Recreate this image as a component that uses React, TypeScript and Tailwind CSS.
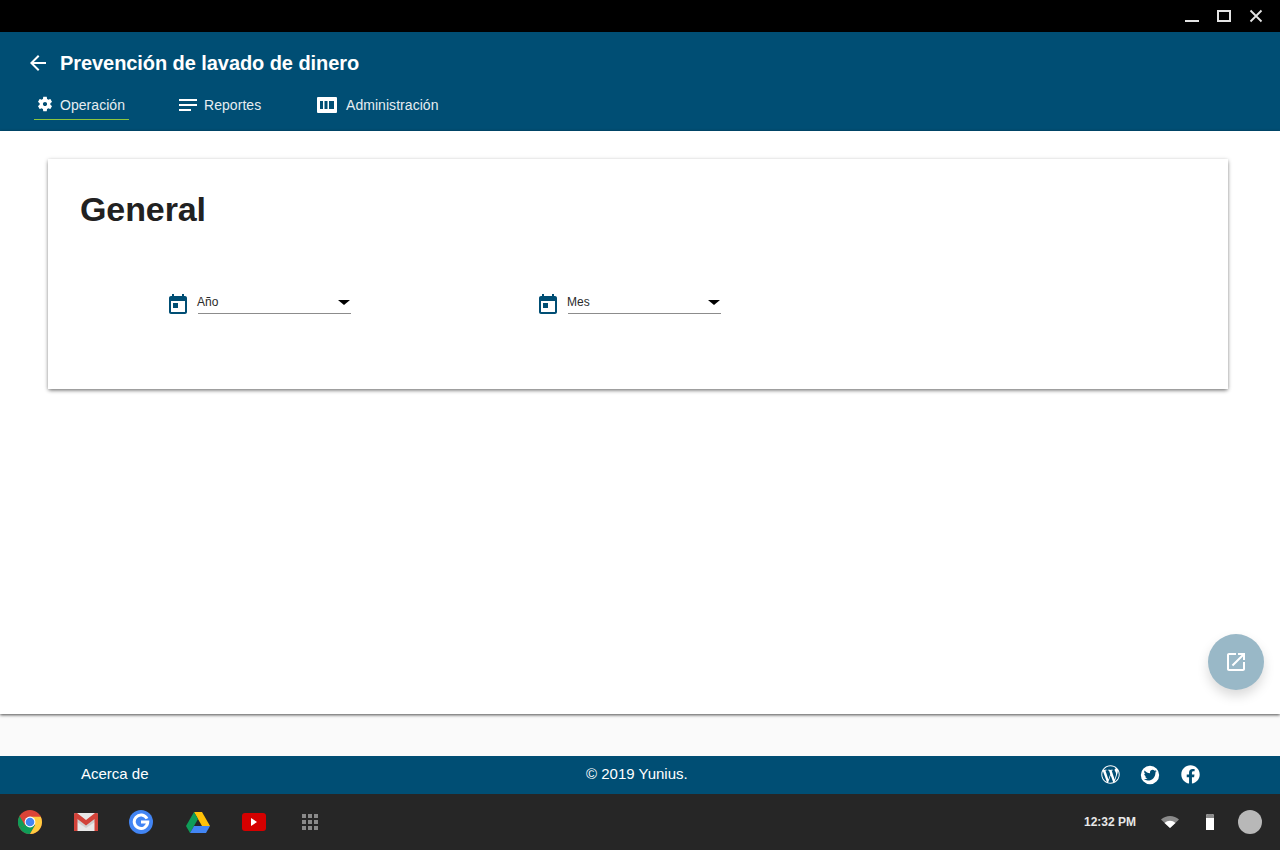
import React from "react";
import { FaWordpressSimple, FaFacebook } from "react-icons/fa";

const Ico = ({ d, className }: { d: string; className?: string }) => (
  <svg viewBox="0 0 24 24" fill="currentColor" className={className}><path d={d} /></svg>
);

const gear = "M19.14 12.94c.04-.3.06-.61.06-.94 0-.32-.02-.64-.07-.94l2.03-1.58c.18-.14.23-.41.12-.61l-1.92-3.32c-.12-.22-.37-.29-.59-.22l-2.39.96c-.5-.38-1.03-.7-1.62-.94l-.36-2.54c-.04-.24-.24-.41-.48-.41h-3.84c-.24 0-.43.17-.47.41l-.36 2.54c-.59.24-1.13.57-1.62.94l-2.39-.96c-.22-.08-.47 0-.59.22L2.74 8.87c-.12.21-.08.47.12.61l2.03 1.58c-.05.3-.09.63-.09.94s.02.64.07.94l-2.03 1.58c-.18.14-.23.41-.12.61l1.92 3.32c.12.22.37.29.59.22l2.39-.96c.5.38 1.03.7 1.62.94l.36 2.54c.05.24.24.41.48.41h3.84c.24 0 .44-.17.47-.41l.36-2.54c.59-.24 1.13-.56 1.62-.94l2.39.96c.22.08.47 0 .59-.22l1.92-3.32c.12-.22.07-.47-.12-.61l-2.01-1.58zM12 14.800c-1.540 0-2.800-1.260-2.800-2.800s1.260-2.800 2.800-2.800 2.800 1.260 2.800 2.800-1.260 2.800-2.800 2.800z";
const today = "M19 3h-1V1h-2v2H8V1H6v2H5c-1.11 0-1.99.9-1.99 2L3 19c0 1.1.89 2 2 2h14c1.1 0 2-.9 2-2V5c0-1.1-.9-2-2-2zm0 16H5V8h14v11zM7 10h5v5H7z";
const openNew = "M19 19H5V5h7V3H5c-1.11 0-2 .9-2 2v14c0 1.1.89 2 2 2h14c1.1 0 2-.9 2-2v-7h-2v7zM14 3v2h3.59l-9.83 9.83 1.41 1.41L19 6.41V10h2V3h-7z";
const twitter = "M12 2a10 10 0 1 0 0 20 10 10 0 0 0 0-20zm5.9 7.3v.4c0 3.9-3 8.3-8.3 8.3-1.7 0-3.2-.5-4.5-1.3h.7c1.4 0 2.6-.5 3.6-1.2-1.3 0-2.4-.9-2.7-2h.5c.3 0 .5 0 .8-.1-1.3-.3-2.3-1.4-2.3-2.9.4.2.8.3 1.3.4-.8-.5-1.3-1.4-1.3-2.4 0-.5.1-1 .4-1.5 1.4 1.8 3.6 2.9 6 3-.1-.2-.1-.4-.1-.7 0-1.6 1.3-2.9 2.9-2.9.8 0 1.6.4 2.1.9.7-.1 1.3-.4 1.9-.7-.2.7-.7 1.2-1.3 1.6.6-.1 1.2-.2 1.7-.5-.4.6-.9 1.2-1.4 1.6z";

function Select({ label }: { label: string }) {
  return (
    <div className="flex items-start w-[184px]">
      <Ico d={today} className="w-6 h-6 text-[#004e74] -ml-[3px] mt-[1px] shrink-0" />
      <div className="ml-[8px] w-[153px] h-[22px] border-b border-[#8c8c8c] flex items-start justify-between pt-[3px]">
        <span className="text-[12px] leading-[15px] text-[#2a2a2a] -ml-px">{label}</span>
        <span className="w-0 h-0 border-x-[6px] border-x-transparent border-t-[5px] border-t-black mt-[5px] mr-[1px]" />
      </div>
    </div>
  );
}

function Tab({ children, label, active, className }: { children: React.ReactNode; label: string; active?: boolean; className: string }) {
  return (
    <div className={`flex items-center h-[30px] ${active ? "border-b border-[#8cc63f]" : "pb-px"} ${className}`}>
      {children}
      <span className="text-[14px] leading-[18px] text-[#e6edf1] tracking-[0.05px]">{label}</span>
    </div>
  );
}

export default function App() {
  return (
    <div className="w-[1280px] h-[850px] flex flex-col overflow-hidden bg-white font-['Liberation_Sans',sans-serif]">
      <div className="h-8 bg-black flex items-center justify-end shrink-0">
        <div className="w-[14px] h-[2px] bg-[#e4e4e4] mt-[10px] mr-[18px]" />
        <div className="w-[14px] h-[12px] border-2 border-[#e4e4e4] mr-[18px]" />
        <svg viewBox="0 0 14 14" className="w-[14px] h-[14px] text-[#e4e4e4] mr-[17px]" stroke="currentColor" strokeWidth="1.8"><path d="M1.5 1.5l11 11M12.500 1.500l-11 11" /></svg>
      </div>

      <header className="h-[99px] bg-[#004e74] shrink-0 flex flex-col text-white">
        <div className="flex items-center h-[62px] pl-[26px]">
          <svg viewBox="0 0 24 24" fill="currentColor" className="w-6 h-6 mr-[10px]"><path d="M20 11H7.830l5.590-5.590L12 4l-8 8 8 8 1.410-1.410L7.830 13H20v-2z" /></svg>
          <span className="text-[20px] leading-6 font-bold tracking-[-0.07px]">Prevención de lavado de dinero</span>
        </div>
        <div className="flex pl-[34px] -mt-[4px]">
          <Tab label="Operación" active className="w-[95px] pl-[2px]">
            <Ico d={gear} className="w-[18px] h-[18px] text-white mr-[6px] -mt-[1px]" />
          </Tab>
          <Tab label="Reportes" className="ml-[50px] w-[138px]">
            <svg viewBox="0 0 18 12" fill="white" className="w-[18px] h-[12px] mr-[7px]"><path d="M0 0h18v2H0zM0 5h18v2H0zM0 10h12v2H0z" /></svg>
          </Tab>
          <Tab label="Administración" className="">
            <svg viewBox="0 0 20 16" className="w-[20px] h-[16px] mr-[9px]"><path fill="white" fillRule="evenodd" d="M1 0h18a1 1 0 0 1 1 1v14a1 1 0 0 1-1 1H1a1 1 0 0 1-1-1V1a1 1 0 0 1 1-1zM3 4v8h3V4zM7.500 4v8h3V4zM12 4v8h5V4z" /></svg>
          </Tab>
        </div>
      </header>

      <main className="relative h-[583px] shrink-0 bg-white shadow-[0_1px_3px_rgba(0,0,0,0.7)] z-10 pt-[28px] pl-[48px] pr-[52px]">
        <section className="h-[230px] bg-white shadow-[0_2px_4px_-1px_rgba(0,0,0,0.45),0_1px_4px_rgba(0,0,0,0.25)] pl-[32px] pt-[30px]">
          <h1 className="text-[34px] leading-[40px] font-bold text-[#212121] tracking-[-0.1px]">General</h1>
          <div className="flex gap-[186px] mt-[63px] ml-[89px]">
            <Select label="Año" />
            <Select label="Mes" />
          </div>
        </section>
        <button className="absolute right-[16px] top-[503px] w-14 h-14 rounded-full bg-[#99b8c7] flex items-center justify-center shadow-[0_6px_12px_rgba(0,0,0,0.15)]">
          <Ico d={openNew} className="w-6 h-6 text-white" />
        </button>
      </main>

      <div className="h-[42px] bg-[#fafafa] shrink-0" />

      <footer className="relative h-[38px] bg-[#004e74] shrink-0 flex items-center text-white text-[15px]">
        <span className="ml-[81px] -mt-[2px]">Acerca de</span>
        <span className="absolute left-[586px] -mt-[2px]">© 2019 Yunius.</span>
        <div className="ml-auto flex items-center mr-[80px] gap-[19px] -mt-px">
          <FaWordpressSimple className="w-[19px] h-[19px] mr-[1px] -ml-[1px]" />
          <Ico d={twitter} className="w-[22px] h-[22px] -mx-px" />
          <FaFacebook className="w-[19px] h-[19px] ml-[2px]" />
        </div>
      </footer>

      <div className="h-[56px] bg-[#262626] shrink-0 flex items-center pl-[18px]">
        <svg viewBox="0 0 24 24" className="w-6 h-6">
          <circle cx="12" cy="12" r="12" fill="#db4437" />
          <path d="M12 12 1.600 18A12 12 0 0 0 12 24l5.200-9z" fill="#0f9d58" />
          <path d="M1.600 18A12 12 0 0 1 1.600 6l5.200 9z" fill="#0f9d58" />
          <path d="M12 6.800h10.800A12 12 0 0 1 12 24l5.200-9z" fill="#ffcd40" />
          <circle cx="12" cy="12" r="5.400" fill="#fff" />
          <circle cx="12" cy="12" r="4.300" fill="#4285f4" />
        </svg>
        <svg viewBox="0 0 24 18" className="w-6 h-[18px] ml-[32px]">
          <rect width="24" height="18" rx="1.500" fill="#e8e8e8" />
          <path d="M12 11 24 1v6L12 15 0 7V1z" fill="#d0d0d0" />
          <path d="M0 1.500A1.500 1.500 0 0 1 1.500 0H3l9 7 9-7h1.500A1.500 1.500 0 0 1 24 1.500V18h-3.500V6L12 12.500 3.500 6v12H0z" fill="#d2433a" />
        </svg>
        <div className="w-6 h-6 ml-[31px] rounded-full bg-[#4285f4] flex items-center justify-center">
          <svg viewBox="0 0 24 24" className="w-[18px] h-[18px]" fill="none" stroke="white" strokeWidth="4"><path d="M20 7.500A9 9 0 1 0 21 12H12" /></svg>
        </div>
        <svg viewBox="0 0 24 21" className="w-6 h-[21px] ml-[33px]">
          <path d="M8 0h8l8 14h-8z" fill="#ffc107" />
          <path d="M8 0 0 14l4 7 8-14z" fill="#0f9d58" />
          <path d="M8 14h16l-4 7H4z" fill="#4285f4" />
        </svg>
        <div className="w-6 h-[18px] ml-[32px] rounded-[3px] bg-[#d50000] flex items-center justify-center">
          <span className="w-0 h-0 border-y-[4px] border-y-transparent border-l-[6px] border-l-white" />
        </div>
        <div className="grid grid-cols-3 gap-[2px] ml-[36px]">
          {Array.from({ length: 9 }).map((_, i) => (
            <span key={i} className="w-[4px] h-[4px] bg-[#8a8a8a]" />
          ))}
        </div>
        <span className="ml-auto text-[12px] font-bold text-[#e8e8e8]">12:32 PM</span>
        <svg viewBox="0 0 18 13" className="w-[18px] h-[13px] ml-[25px] -mt-px">
          <path d="M0 4.500A13 13 0 0 1 18 4.500L9 13z" fill="#8a8a8a" />
          <path d="M3.500 8A8 8 0 0 1 14.500 8L9 13z" fill="#fff" />
        </svg>
        <div className="ml-[27px] w-[8px] h-[16px] rounded-t-[2px] bg-white relative overflow-hidden">
          <div className="h-[4px] bg-[#8a8a8a]" />
        </div>
        <div className="ml-[24px] mr-[18px] w-6 h-6 rounded-full bg-[#b8b8b8]" />
      </div>
    </div>
  );
}
